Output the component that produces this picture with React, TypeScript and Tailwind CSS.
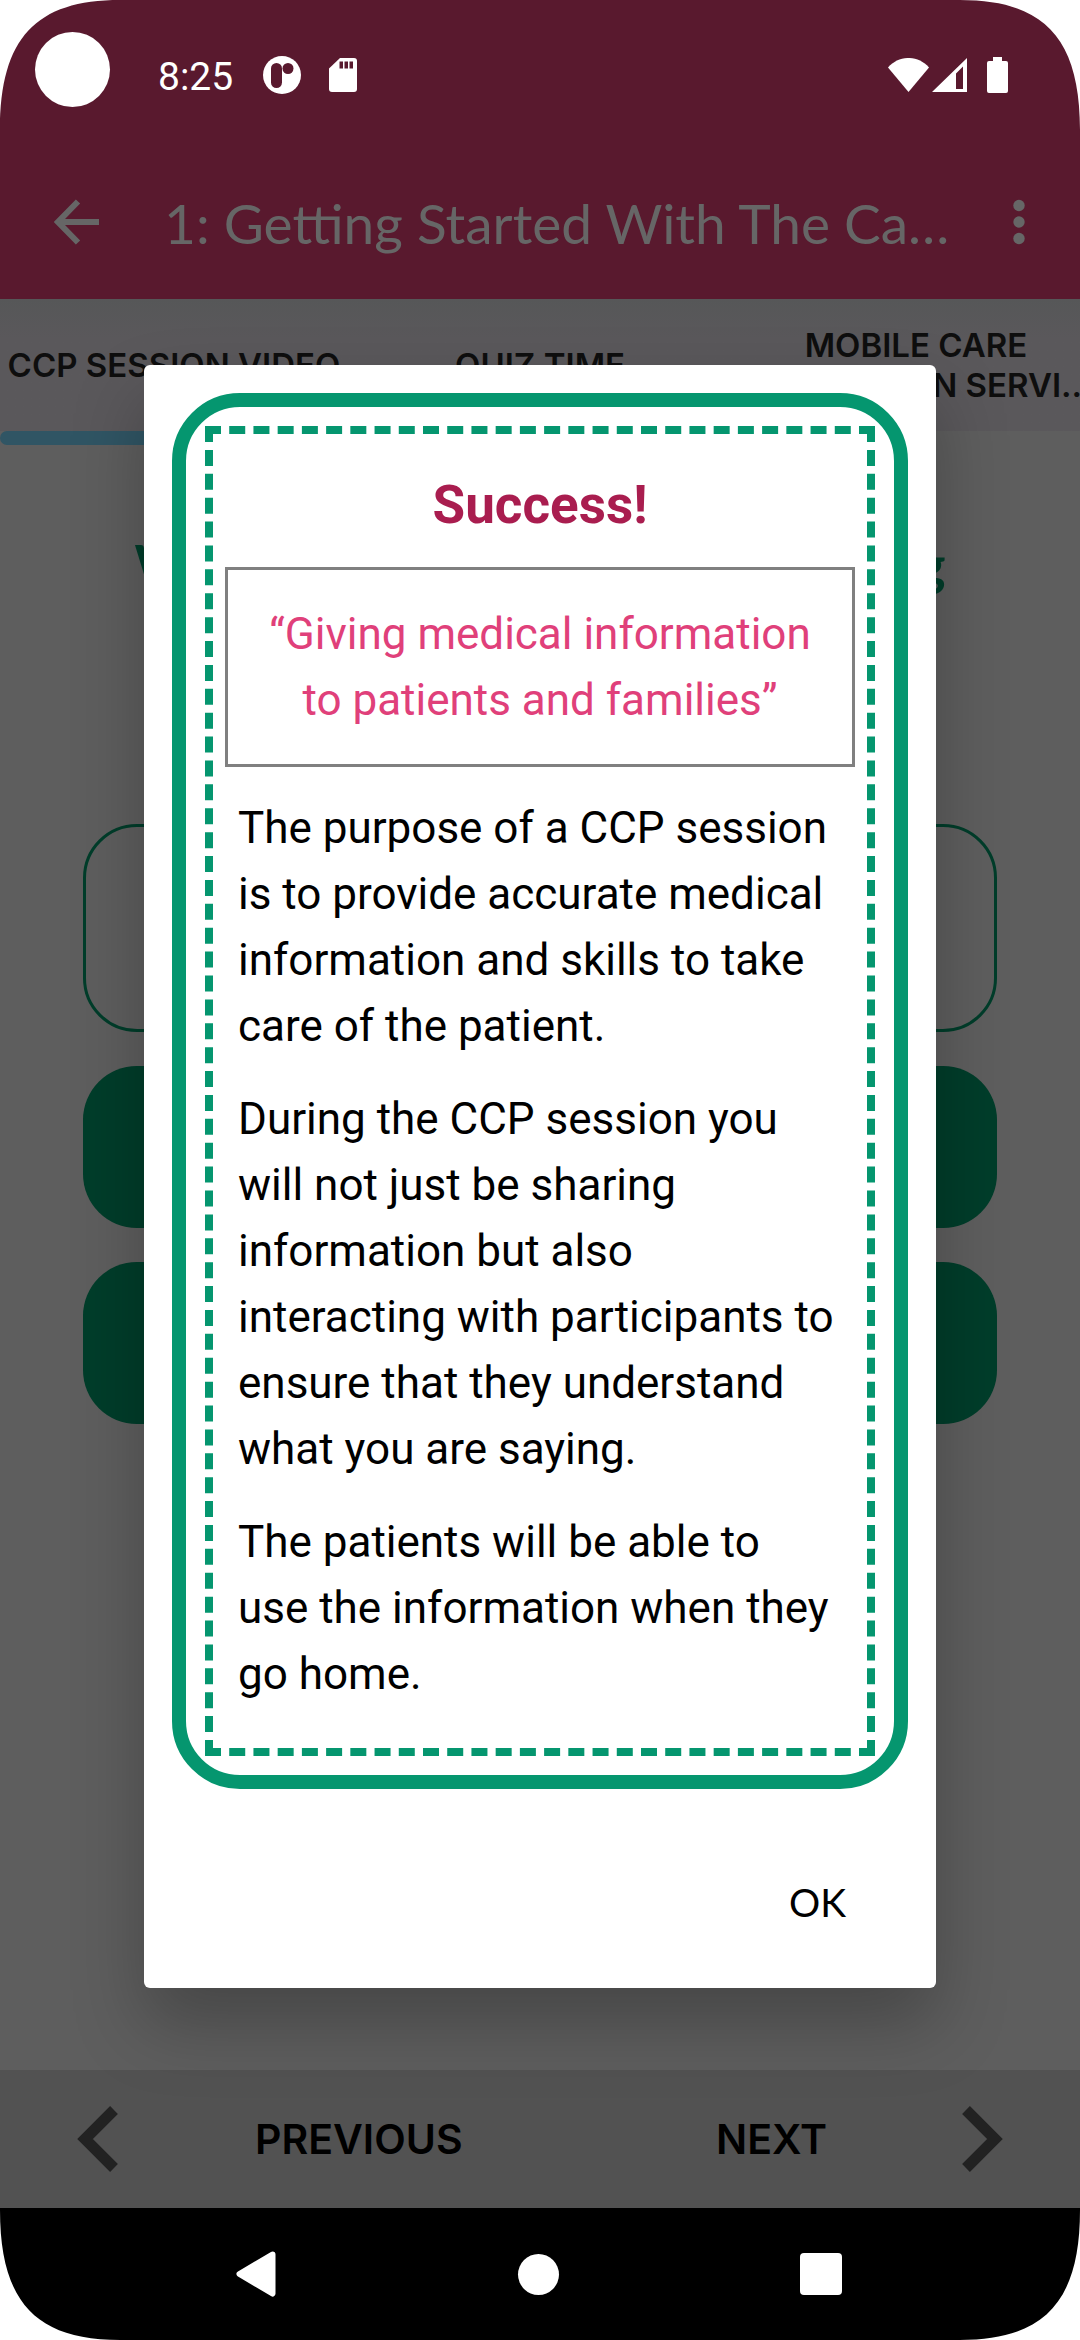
import React from "react";

function StatusBar() {
  return (
    <div className="flex h-36 items-center pt-[10px] pr-[72px] pl-[158px] text-white">
      <span className="font-['Roboto',sans-serif] text-[39px] leading-[48px]">8:25</span>
      <svg className="ml-[30px] h-[38px] w-[38px] -mt-1" viewBox="0 0 38 38" aria-hidden="true">
        <circle cx="19" cy="19" r="19" fill="#fff" />
        <rect x="8" y="7" width="11" height="25" rx="5.5" fill="#59192e" />
        <circle cx="25" cy="12.500" r="5.500" fill="#59192e" />
      </svg>
      <svg className="ml-[28px] h-[34px] w-[28px] -mt-1" viewBox="0 0 28 34" aria-hidden="true">
        <path
          d="M11 0H25a3 3 0 0 1 3 3V31a3 3 0 0 1-3 3H3a3 3 0 0 1-3-3V10.500Z"
          fill="#fff"
        />
        <path d="M10.500 3.500h3.500v7h-3.500zM15.500 3.500h3.500v7h-3.500zM20.500 3.500h3.500v7h-3.500z" fill="#59192e" />
      </svg>
      <div className="-mt-1 ml-auto flex items-center">
        <svg className="h-[34px] w-[41px]" viewBox="0 0 41 34" aria-hidden="true">
          <path d="M0 9.500C11-3.200 30-3.200 41 9.500L20.500 34Z" fill="#fff" />
        </svg>
        <svg className="ml-[3px] h-[34px] w-[35px]" viewBox="0 0 35 34" aria-hidden="true">
          <path d="M0 34 35 0V34ZM24 15.500V31h7V8.500Z" fill="#fff" fillRule="evenodd" />
        </svg>
        <svg className="ml-5 h-[36px] w-[21px]" viewBox="0 0 21 36" aria-hidden="true">
          <path
            d="M6 0h9v4h4a2 2 0 0 1 2 2V34a2 2 0 0 1-2 2H2a2 2 0 0 1-2-2V6a2 2 0 0 1 2-2h4Z"
            fill="#fff"
          />
        </svg>
      </div>
    </div>
  );
}

function AppBar() {
  return (
    <div className="flex h-[155px] items-center pr-[53px] pl-[54px] text-[#666666]">
      <button type="button" aria-label="Back" className="shrink-0">
        <svg className="h-[46px] w-[46px]" viewBox="0 0 46 46" fill="none" stroke="currentColor" strokeWidth="6" aria-hidden="true">
          <path d="M24 2.500 4 23 24 43.500M4 23H45" />
        </svg>
      </button>
      <h1 className="ml-[64px] flex-1 whitespace-nowrap pt-[2px] font-['Lato',sans-serif] text-[55px] leading-[64px]">
        1: Getting Started With The Ca…
      </h1>
      <button type="button" aria-label="More options" className="shrink-0">
        <svg className="h-[46px] w-[16px]" viewBox="0 0 16 46" fill="currentColor" aria-hidden="true">
          <circle cx="8" cy="6.500" r="5.700" />
          <circle cx="8" cy="23" r="5.700" />
          <circle cx="8" cy="39.500" r="5.700" />
        </svg>
      </button>
    </div>
  );
}

function Tabs() {
  return (
    <nav className="overflow-hidden bg-[#5a585b] bg-linear-to-b from-[#565758] to-[#5a585b] to-30% font-['Inter',sans-serif] text-[33px] leading-10 font-semibold text-[#0e0e0e]">
      <div className="-mr-5 grid h-[132px] grid-cols-[348fr_384fr_368fr] items-center text-center whitespace-nowrap">
        <button type="button">CCP SESSION VIDEO</button>
        <button type="button">QUIZ TIME</button>
        <button type="button">
          MOBILE CARE
          <br />
          COMPANION SERVI..
        </button>
      </div>
    </nav>
  );
}

function Quiz() {
  return (
    <main className="flex-1 bg-[#5e5e5e]">
      <div className="h-[14px] w-1/3 rounded-full bg-[#305564]" />
      <h2 className="mt-[86px] text-center font-['Lato',sans-serif] text-[55px] leading-[66px] font-bold text-[#003d2a]">
        What is the purpose of delivering
        <br />a CCP session?
      </h2>
      <div className="mx-[83px] mt-[161px] flex flex-col gap-[34px]">
        <button type="button" aria-label="Option 1" className="h-[208px] rounded-[54px] border-[3px] border-[#003d2a]" />
        <button type="button" aria-label="Option 2" className="h-[162px] rounded-[54px] bg-[#003d2a]" />
        <button type="button" aria-label="Option 3" className="h-[162px] rounded-[54px] bg-[#003d2a]" />
      </div>
    </main>
  );
}

function Pager() {
  return (
    <div className="flex h-[138px] items-center justify-between bg-[#525252] px-[77px] font-['Inter',sans-serif] text-[41px] leading-[48px] font-semibold text-black">
      <button type="button" className="flex items-center gap-[136px]">
        <svg className="h-[68px] w-[42px]" viewBox="0 0 42 68" fill="none" stroke="#222222" strokeWidth="11" aria-hidden="true">
          <path d="M37 5 8 34 37 63" />
        </svg>
        PREVIOUS
      </button>
      <button type="button" className="flex items-center gap-[134px]">
        NEXT
        <svg className="h-[68px] w-[42px]" viewBox="0 0 42 68" fill="none" stroke="#222222" strokeWidth="11" aria-hidden="true">
          <path d="M5 5 34 34 5 63" />
        </svg>
      </button>
    </div>
  );
}

function SystemNav() {
  return (
    <div className="flex h-[132px] items-center justify-between bg-black pr-[238px] pl-[236px]">
      <button type="button" aria-label="System back">
        <svg className="h-[46px] w-[40px]" viewBox="0 0 40 46" aria-hidden="true">
          <path d="M36.500 3.500 3.500 23 36.500 42.500Z" fill="#fff" stroke="#fff" strokeWidth="6" strokeLinejoin="round" />
        </svg>
      </button>
      <button type="button" aria-label="Home" className="h-[41px] w-[41px] rounded-full bg-white" />
      <button type="button" aria-label="Recent apps" className="h-[42px] w-[42px] rounded-[4px] bg-white" />
    </div>
  );
}

function SuccessDialog() {
  return (
    <div className="absolute inset-0 flex items-center justify-center px-36 pt-[13px]">
      <div
        role="dialog"
        aria-labelledby="dialog-title"
        className="w-full rounded-[6px] bg-white p-7 font-['Roboto',sans-serif] text-[44px] leading-[66px] text-black shadow-[0_36px_70px_0_rgba(0,0,0,0.25)]"
      >
        <div className="rounded-[68px] border-[14px] border-[#05966f] p-[19px]">
          <div className="border-8 border-dashed border-[#05966f] p-3">
            <h2 id="dialog-title" className="mt-5 mb-[23px] text-center text-[53px] leading-[78px] font-bold text-[#a91d4f]">
              Success!
            </h2>
            <p className="border-[3px] border-[#808080] px-3 py-[31px] text-center text-[#e0407a]">
              “Giving medical information
              <br />
              to patients and families”
            </p>
            <div className="flex flex-col gap-[27px] pt-7 pr-[18px] pb-[29px] pl-[13px]">
              <p>The purpose of a CCP session is to provide accurate medical information and skills to take care of the patient.</p>
              <p>
                During the CCP session you will not just be sharing information but also interacting with participants to
                ensure that they understand what you are saying.
              </p>
              <p>The patients will be able to use the information when they go home.</p>
            </div>
          </div>
        </div>
        <div className="mt-[55px] flex justify-end pr-[30px]">
          <button type="button" className="h-[116px] px-8 font-['Lato',sans-serif] text-[39px] leading-[48px]">
            OK
          </button>
        </div>
      </div>
    </div>
  );
}

function Corner({ place }: { place: string }) {
  return (
    <svg className={`pointer-events-none absolute h-[130px] w-[120px] ${place}`} viewBox="0 0 120 130" aria-hidden="true">
      <path d="M0 0H120C36 0 0 38 0 130Z" fill="#fff" />
    </svg>
  );
}

export default function App() {
  return (
    <div className="relative flex min-h-screen flex-col overflow-hidden bg-[#5e5e5e]">
      <header className="relative bg-[#59192e]">
        <StatusBar />
        <AppBar />
      </header>
      <Tabs />
      <Quiz />
      <Pager />
      <SystemNav />
      <SuccessDialog />
      <div className="absolute top-8 left-[35px] h-[75px] w-[75px] rounded-full bg-white" />
      <Corner place="top-0 left-0" />
      <Corner place="top-0 right-0 -scale-x-100" />
      <Corner place="bottom-0 left-0 -scale-y-100" />
      <Corner place="right-0 bottom-0 -scale-100" />
    </div>
  );
}
